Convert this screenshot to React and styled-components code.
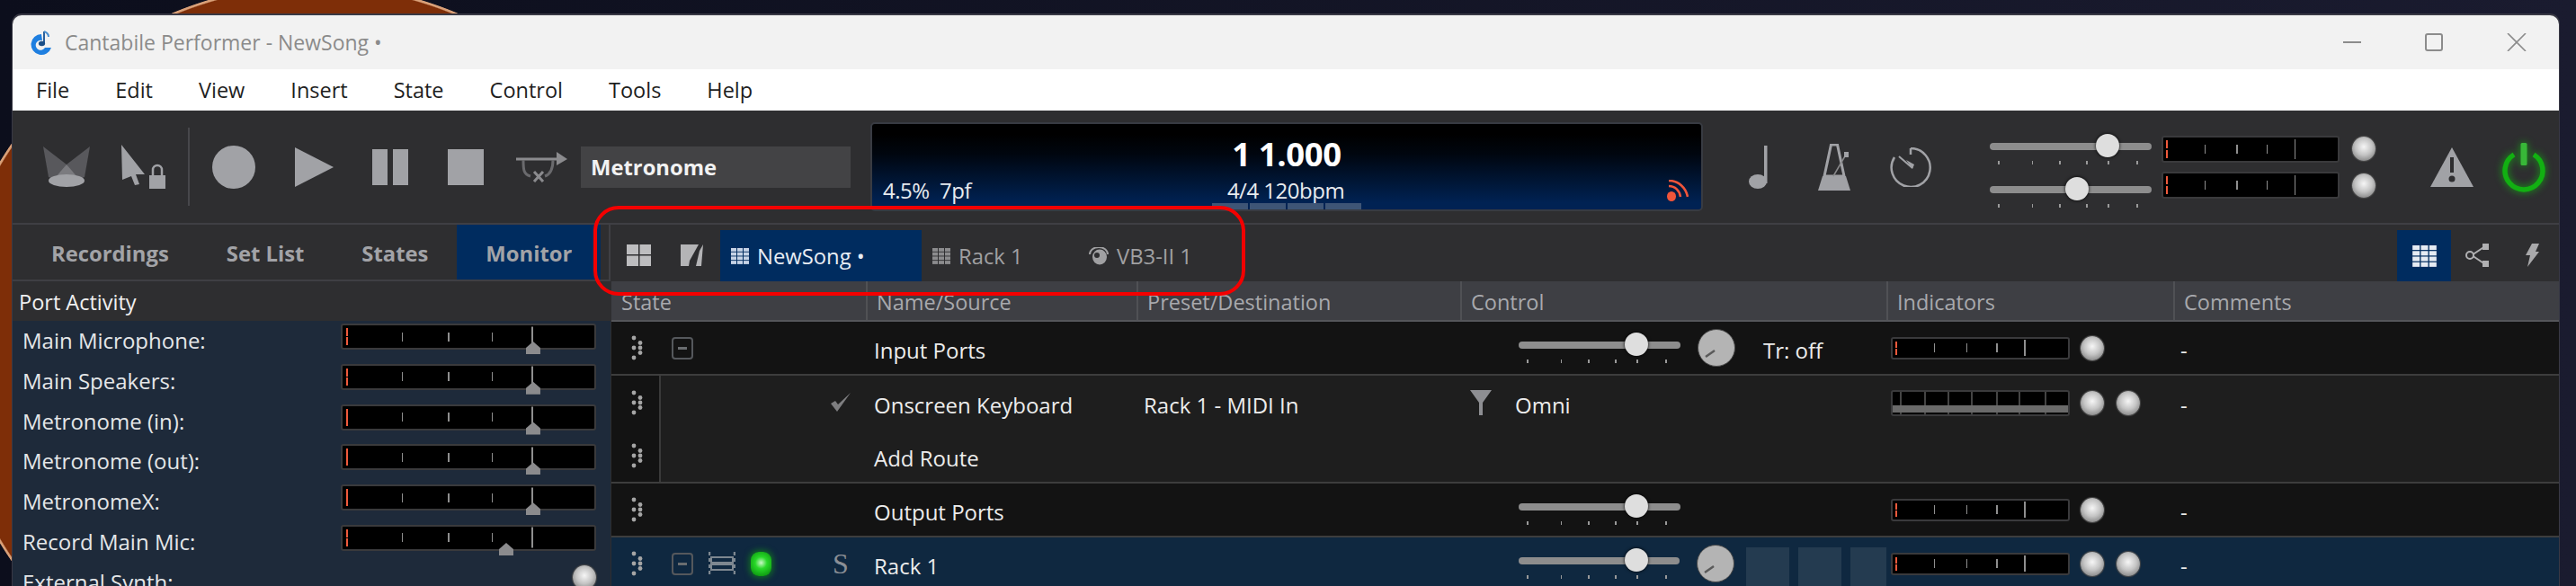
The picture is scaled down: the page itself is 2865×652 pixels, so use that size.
import React from "react";
import styled, { createGlobalStyle } from "styled-components";

const Global = createGlobalStyle`
  html, body { margin: 0; padding: 0; }
  body {
    width: 2865px;
    height: 652px;
    overflow: hidden;
    font-family: "Open Sans", "Noto Sans", sans-serif;
    background:
      radial-gradient(circle 409px at 350px 392px, #7e2e08 99.3%, #d9a078 99.6%, #d9a078 100%, transparent 100.2%),
      linear-gradient(to right, #0c0e1c, #1a1b2f);
  }
  #root { width: 2865px; height: 652px; overflow: hidden; }
`;

const Window = styled.div`
  position: relative;
  width: 2832px;
  height: 635px;
  margin: 17px 0 0 14px;
  overflow: hidden;
  background: #2e2e30;
  border-radius: 10px 10px 0 0;
  box-shadow: 0 -1px 0 1px #393945;
  display: flex;
  flex-direction: column;
`;

const TitleBar = styled.div`
  height: 60px;
  flex: none;
  display: flex;
  align-items: center;
  background: #f2f2f2;
  padding-left: 19px;
`;

const TitleText = styled.span`
  margin-left: 13px;
  font-size: 23px;
  color: #8b8b8b;
`;

const WinButtons = styled.div`
  margin-left: auto;
  margin-right: 36px;
  display: flex;
  gap: 71px;
  align-items: center;
`;

const MenuBar = styled.div`
  height: 46px;
  flex: none;
  display: flex;
  align-items: center;
  gap: 51px;
  background: #fff;
  padding-left: 26px;
`;

const MenuItem = styled.span`
  font-size: 23.5px;
  color: #1e1e1e;
`;

const Toolbar = styled.div`
  height: 127px;
  flex: none;
  box-sizing: border-box;
  border-bottom: 2px solid #3f3f44;
  display: flex;
  align-items: center;
`;

const ToolSlot = styled.div`
  flex: none;
  display: flex;
  margin-left: ${(p) => p.$ml}px;
  ${(p) => (p.$top !== undefined ? `align-self: flex-start; margin-top: ${p.$top}px;` : "")}
  ${(p) => (p.$col ? `flex-direction: column; gap: ${p.$gap}px;` : "")}
`;

const Separator = styled.div`
  width: 2px;
  height: 87px;
  margin-left: 25px;
  background: #47474b;
`;

const NameBox = styled.div`
  width: 300px;
  height: 46px;
  margin-left: 15px;
  box-sizing: border-box;
  padding-left: 11px;
  display: flex;
  align-items: center;
  background: #434345;
  color: #f2f2f2;
  font-size: 23.8px;
  font-weight: 700;
`;

const Display = styled.div`
  width: 926px;
  height: 99px;
  margin-left: 22px;
  flex: none;
  box-sizing: border-box;
  border: 2px solid #383b42;
  border-radius: 5px;
  background: linear-gradient(to bottom, #000 12%, #00060f 35%, #002253 92%);
  display: flex;
  flex-direction: column;
  overflow: hidden;
`;

const BigTime = styled.div`
  text-align: center;
  font-size: 36.5px;
  line-height: 40px;
  margin-top: 13px;
  font-weight: 700;
  color: #fff;
  letter-spacing: -0.4px;
`;

const DisplayRow = styled.div`
  display: grid;
  grid-template-columns: 1fr auto 1fr;
  align-items: center;
  padding: 0 14px 0 12px;
  height: 28px;
  margin-top: 4px;
  color: #e8ebef;
  font-size: 24px;
  letter-spacing: -0.5px;
`;

const DisplayRight = styled.div`
  justify-self: end;
  display: flex;
`;

const BeatRow = styled.div`
  margin-top: auto;
  display: flex;
  justify-content: center;
  gap: 2px;
`;

const Beat = styled.div`
  width: 40px;
  height: 7px;
  background: #3e5576;
`;

const SliderBox = styled.div`
  position: relative;
  width: 180px;
  height: 34px;
`;

const Track = styled.div`
  height: 8px;
  margin-top: 10px;
  border-radius: 4px;
  background: #8d8d8d;
`;

const Thumb = styled.div`
  position: absolute;
  top: 0;
  left: ${(p) => p.$at}px;
  width: 26px;
  height: 26px;
  border-radius: 50%;
  background: #dedede;
  box-shadow: 0 0 3px 1px rgba(0, 0, 0, 0.55);
`;

const SliderTick = styled.i`
  position: absolute;
  top: 30px;
  left: ${(p) => p.$at}px;
  width: 1.5px;
  height: 4px;
  background: #9a9a9a;
`;

const MeterBox = styled.div`
  position: relative;
  flex: none;
  width: ${(p) => p.$w}px;
  height: ${(p) => p.$h}px;
  box-sizing: border-box;
  background: #000;
  border: 2px solid #3a3a3c;
  border-radius: 3px;
`;

const MeterTick = styled.i`
  position: absolute;
  left: ${(p) => p.$pct}%;
  top: 50%;
  width: 1.5px;
  height: ${(p) => p.$h}px;
  transform: translateY(-50%);
  background: #8f8f8f;
`;

const MeterRed = styled.i`
  position: absolute;
  left: 1.5%;
  top: 3px;
  bottom: 3px;
  width: 2px;
  background: ${(p) =>
    p.$split
      ? "linear-gradient(to bottom, #f05a3c 45%, transparent 45%, transparent 55%, #f05a3c 55%)"
      : "#f05a3c"};
`;

const Level = styled.i`
  position: absolute;
  left: ${(p) => p.$pct}%;
  top: 18px;
  width: 16px;
  height: 14px;
  margin-left: -8px;
  background: #8b8b8d;
  clip-path: polygon(50% 0, 100% 50%, 100% 100%, 0 100%, 0 50%);
`;

const MidiBar = styled.i`
  position: absolute;
  left: 0;
  right: 0;
  top: 15px;
  height: 8px;
  background: #6a6a6a;
`;

const MidiLine = styled.i`
  position: absolute;
  left: ${(p) => p.$at}px;
  top: 0;
  bottom: 0;
  width: 2px;
  background: #444;
`;

const Led = styled.div`
  flex: none;
  width: 26px;
  height: 27px;
  margin-left: ${(p) => p.$ml || 0}px;
  border-radius: 50%;
  background: radial-gradient(circle at 50% 42%, #f6f6f6 0, #c4c4c4 45%, #777 90%);
  box-shadow: 0 0 1px 1px #4a4a4a;
`;

const GreenLed = styled.div`
  width: 23px;
  height: 27px;
  margin-left: 17px;
  border-radius: 9px;
  background: radial-gradient(circle at 50% 45%, #c9f7c6 0, #28d828 35%, #0f9c12 80%);
  box-shadow: 0 0 6px 2px rgba(20, 150, 20, 0.6);
`;

const TabsArea = styled.div`
  flex: 1;
  min-height: 0;
  display: grid;
  grid-template-columns: 665px 1fr;
`;

const LeftCol = styled.div`
  display: flex;
  flex-direction: column;
  min-height: 0;
`;

const SideTabs = styled.div`
  height: 61px;
  flex: none;
  display: flex;
  padding-left: 11px;
  border-bottom: 2px solid #3f3f44;
  border-right: 2px solid #3f3f44;
`;

const SideTab = styled.div`
  display: flex;
  align-items: center;
  padding: 2px 32px 0;
  font-size: 23.8px;
  font-weight: 700;
  color: #a2a3a7;
  background: ${(p) => (p.$active ? "#002c5f" : "transparent")};
`;

const PanelTitle = styled.div`
  height: 44px;
  flex: none;
  box-sizing: border-box;
  padding-top: 2px;
  display: flex;
  align-items: center;
  padding-left: 7px;
  font-size: 23.5px;
  color: #f0f0f0;
`;

const PortPanel = styled.div`
  flex: 1;
  background: #1e2a3a;
  padding: 3px 16px 0 11px;
  display: grid;
  grid-auto-rows: 44.8px;
`;

const PortRow = styled.div`
  display: flex;
  align-items: flex-start;
`;

const PortLabel = styled.span`
  flex: 1;
  font-size: 24px;
  line-height: 38px;
  color: #e4e6e8;
`;

const RightCol = styled.div`
  display: flex;
  flex-direction: column;
  min-height: 0;
`;

const TabRow = styled.div`
  height: 63px;
  flex: none;
  box-sizing: border-box;
  display: flex;
  align-items: flex-end;
  padding-left: 18px;
`;

const IconSlot = styled.div`
  align-self: center;
  margin-top: 4px;
  margin-left: ${(p) => p.$ml || 0}px;
  display: flex;
`;

const DocTab = styled.div`
  width: ${(p) => p.$w}px;
  height: 57px;
  box-sizing: border-box;
  padding-left: 12px;
  margin-left: ${(p) => p.$ml || 0}px;
  display: flex;
  align-items: center;
  gap: 9px;
  font-size: 23.8px;
  color: ${(p) => (p.$active ? "#e8edf4" : "#a0a0a2")};
  background: ${(p) => (p.$active ? "#002c5f" : "transparent")};
`;

const ViewTab = styled.div`
  margin-left: auto;
  width: 60px;
  height: 57px;
  display: flex;
  align-items: center;
  justify-content: center;
  background: #002c5f;
`;

const HeaderRow = styled.div`
  height: 45px;
  flex: none;
  box-sizing: border-box;
  display: grid;
  grid-template-columns: 283px 301px 360px 474px 319px 1fr;
  background: #3e3f44;
  border-bottom: 2px solid #55565a;
  margin-left: 1px;
`;

const HeaderCell = styled.div`
  display: flex;
  align-items: center;
  padding: 3px 0 0 ${(p) => (p.$first ? 11 : 10)}px;
  font-size: 23.5px;
  color: #a8a9ad;
  border-left: ${(p) => (p.$first ? "none" : "2px solid #505155")};
`;

const Row = styled.div`
  height: 60px;
  flex: none;
  box-sizing: border-box;
  display: grid;
  grid-template-columns: 283px 301px 360px 474px 319px 1fr;
  margin-left: 1px;
  background: ${(p) => (p.$selected ? "#0f2840" : p.$sub ? "#1e1e1e" : "#131313")};
  border-bottom: ${(p) => (p.$bare ? "none" : "2px solid #3d3d3d")};
  color: #ececec;
  font-size: 24px;
`;

const Cell = styled.div`
  display: flex;
  align-items: center;
  padding-left: ${(p) => p.$pad || 0}px;
`;

const RowText = styled.span`
  margin-top: 4px;
  margin-left: ${(p) => p.$ml || 0}px;
`;

const StateCell = styled(Cell)`
  padding-left: 22px;
  padding-right: 16px;
  ${(p) =>
    p.$sub
      ? "background: linear-gradient(to right, #131313 53px, #3a3a3a 53px, #3a3a3a 55px, transparent 55px);"
      : ""}
`;

const Marker = styled.span`
  margin-left: auto;
  width: 24px;
  display: flex;
  justify-content: center;
  font-family: "Liberation Serif", serif;
  font-size: 32px;
  color: #8a8f96;
`;

const KnobSlot = styled.div`
  margin-left: ${(p) => p.$ml}px;
  display: flex;
`;

const PadBlocks = styled.div`
  align-self: flex-end;
  margin-left: 13px;
  height: 47px;
  display: flex;
  gap: 10px;
`;

const PadBlock = styled.div`
  width: ${(p) => p.$w}px;
  height: 100%;
  background: #243b50;
`;

const Callout = styled.div`
  position: absolute;
  left: 646px;
  top: 212px;
  width: 725px;
  height: 100px;
  box-sizing: border-box;
  border: 4px solid #f40000;
  border-radius: 28px;
  pointer-events: none;
`;

const GRAY = "#a1a2a6";

const Logo = () => (
  <svg width="26" height="29" viewBox="0 0 26 29">
    <path d="M13 5a11.5 11.5 0 1 0 11 15h-7a5.5 5.5 0 1 1-3-8z" fill="#1f7fe0" />
    <path d="M16 2v13" stroke="#2a5f9a" strokeWidth="2" />
    <path d="M16 2c3 1 5 3 5 6" stroke="#4a8fd0" strokeWidth="2" fill="none" />
    <ellipse cx="13.5" cy="15.5" rx="3.6" ry="2.8" fill="#1b4f88" />
  </svg>
);

const Spotlight = () => (
  <svg width="52" height="45" viewBox="0 0 52 45">
    <path d="M0 0 L26 20 L16 38 L6 34z" fill="#58585c" />
    <path d="M52 0 L26 20 L36 38 L46 34z" fill="#58585c" />
    <path d="M26 20 L14 34 L38 34z" fill="#7b7b7f" />
    <ellipse cx="26" cy="38" rx="20" ry="7" fill={GRAY} />
  </svg>
);

const CursorLock = () => (
  <svg width="49" height="49" viewBox="0 0 49 49">
    <path d="M0 0 L26 33 L16 33 L20 44 L15 45 L11 35 L1 39z" fill={GRAY} />
    <rect x="31" y="34" width="18" height="15" fill={GRAY} />
    <path d="M35 34v-6a5 5 0 0 1 10 0v6" stroke={GRAY} strokeWidth="2.5" fill="none" />
  </svg>
);

const Record = () => (
  <svg width="48" height="48" viewBox="0 0 48 48">
    <circle cx="24" cy="24" r="24" fill={GRAY} />
  </svg>
);

const Play = () => (
  <svg width="43" height="44" viewBox="0 0 43 44">
    <path d="M0 0L43 22L0 44z" fill={GRAY} />
  </svg>
);

const Pause = () => (
  <svg width="40" height="40" viewBox="0 0 40 40">
    <rect width="17" height="40" fill={GRAY} />
    <rect x="23" width="17" height="40" fill={GRAY} />
  </svg>
);

const Stop = () => (
  <svg width="40" height="40" viewBox="0 0 40 40">
    <rect width="40" height="40" fill={GRAY} />
  </svg>
);

const LoopIcon = () => (
  <svg width="57" height="34" viewBox="0 0 57 34">
    <path d="M0 8H48" stroke="#8b8b8e" strokeWidth="3" />
    <path d="M45 0L57 8L45 15z" fill="#8b8b8e" />
    <path d="M8 9c0 10 0 16 8 18M41 9c0 10-3 16-9 18" stroke="#6a6a6d" strokeWidth="3" fill="none" />
    <path d="M20 22L30 33M30 22L20 33" stroke="#8b8b8e" strokeWidth="3" />
  </svg>
);

const Note = () => (
  <svg width="22" height="48" viewBox="0 0 22 48">
    <rect x="17" width="3.5" height="42" fill={GRAY} />
    <ellipse cx="10" cy="40" rx="10" ry="8" fill={GRAY} />
  </svg>
);

const Metronome = () => (
  <svg width="38" height="52" viewBox="0 0 38 52">
    <path d="M15.5 1H22.5L30 36H8z" fill="none" stroke={GRAY} strokeWidth="3" />
    <path d="M6 36H32L37 52H1z" fill={GRAY} />
    <path d="M18 36L32 12" stroke="#8a8a8c" strokeWidth="1.5" />
    <rect x="30" y="9" width="5" height="6" fill={GRAY} />
  </svg>
);

const Timer = () => (
  <svg width="46" height="44" viewBox="0 0 46 44">
    <path d="M23 1a21.5 21.5 0 1 1-18 10" fill="none" stroke={GRAY} strokeWidth="2.5" />
    <path d="M23 1v7" stroke={GRAY} strokeWidth="2.5" />
    <path d="M10 10L25 23" stroke={GRAY} strokeWidth="2" />
    <path d="M18 14L27 19L25 24z" fill={GRAY} />
  </svg>
);

const Warning = () => (
  <svg width="48" height="44" viewBox="0 0 48 44">
    <path d="M24 0L48 44H0z" fill={GRAY} />
    <path d="M24 11v17" stroke="#2e2e30" strokeWidth="4" />
    <circle cx="24" cy="35" r="3.5" fill="#2e2e30" />
  </svg>
);

const Power = () => (
  <svg width="48" height="54" viewBox="0 0 48 54" style={{ overflow: "visible", filter: "drop-shadow(0 0 4px #14a514)" }}>
    <path d="M13 13a21 21 0 1 0 22 0" fill="none" stroke="#12b012" strokeWidth="5.5" />
    <rect x="20.5" width="7" height="25" rx="1.5" fill="#38b838" />
  </svg>
);

const Rss = () => (
  <svg width="24" height="24" viewBox="0 0 24 24">
    <ellipse cx="5" cy="18.5" rx="5" ry="5.5" fill="#f0553a" />
    <path d="M2 7c7 0 12 5 13 12" fill="none" stroke="#f0553a" strokeWidth="2.6" />
    <path d="M2 1c11 0 19 8 21 18" fill="none" stroke="#f0553a" strokeWidth="2.6" />
  </svg>
);

const TableIcon = ({ color = "#a0a0a2", w = 20, h = 18 }) => (
  <svg width={w} height={h} viewBox="0 0 20 18">
    {[0, 1, 2, 3].map((r) =>
      [0, 1, 2].map((c) => (
        <rect key={`${r}-${c}`} x={c * 7} y={r * 4.7} width="6" height="3.8" fill={color} />
      ))
    )}
  </svg>
);

const Quad = () => (
  <svg width="27" height="24" viewBox="0 0 27 24">
    <rect width="13" height="11" fill="#bdbdbf" />
    <rect x="14.5" width="12.5" height="11" fill="#bdbdbf" />
    <rect y="12.5" width="13" height="11.5" fill="#bdbdbf" />
    <rect x="14.5" y="12.5" width="12.5" height="11.5" fill="#bdbdbf" />
  </svg>
);

const EditIcon = () => (
  <svg width="26" height="27" viewBox="0 0 26 27">
    <path d="M0 2H20L10 20L9 26H0z" fill="#b4b4b6" />
    <path d="M17 26H23L25 2L21 9z" fill="#b4b4b6" />
    <path d="M13 20L23 1" stroke="#2e2e30" strokeWidth="2" />
  </svg>
);

const Vb3Icon = () => (
  <svg width="22" height="20" viewBox="0 0 22 20">
    <path d="M1 8a10 8 0 0 1 20 0" fill="none" stroke="#a0a0a2" strokeWidth="2" />
    <ellipse cx="12" cy="11" rx="8" ry="8.5" fill="#a0a0a2" />
    <ellipse cx="9" cy="9" rx="3" ry="3" fill="#2e2e30" />
  </svg>
);

const ShareIcon = () => (
  <svg width="28" height="26" viewBox="0 0 28 26">
    <path d="M7 13L22 3M7 13L22 23" stroke="#b0b0b2" strokeWidth="2" />
    <circle cx="5" cy="13" r="4" fill="#2e2e30" stroke="#b0b0b2" strokeWidth="2" />
    <path d="M19 0H26V7H19zM19 19H26V26H19z" fill="#b0b0b2" />
  </svg>
);

const Bolt = () => (
  <svg width="15" height="26" viewBox="0 0 15 26">
    <path d="M7 0H15L11 9H15L2 26L5 13H0z" fill="#a8a8aa" />
  </svg>
);

const Grip = () => (
  <svg width="13" height="28" viewBox="0 0 13 28">
    {[[3, 3], [10, 8.5], [3, 14], [10, 19.5], [3, 25], [10, 14]].map(([x, y]) => (
      <circle key={`${x}-${y}`} cx={x} cy={y} r="2.4" fill="#a5a5a5" />
    ))}
  </svg>
);

const MinusBox = () => (
  <svg width="24" height="25" viewBox="0 0 24 25" style={{ marginLeft: 32 }}>
    <rect x="1" y="1" width="22" height="23" rx="3" fill="none" stroke="#55585c" strokeWidth="2" />
    <rect x="7" y="11" width="10" height="3" fill="#6a6d70" />
  </svg>
);

const RackIcon = () => (
  <svg width="30" height="26" viewBox="0 0 30 26" style={{ marginLeft: 17 }}>
    <path d="M1 0V26M29 0V26" stroke="#7d8790" strokeWidth="2.5" strokeDasharray="4 3" />
    <rect x="3" y="6" width="24" height="6" fill="none" stroke="#7d8790" strokeWidth="2" />
    <rect x="3" y="14" width="24" height="6" fill="none" stroke="#7d8790" strokeWidth="2" />
  </svg>
);

const Check = () => (
  <svg width="24" height="22" viewBox="0 0 24 22">
    <path d="M1 12L8 21L23 0L9 13L6 9z" fill="#7e7e80" />
  </svg>
);

const Funnel = () => (
  <svg width="24" height="28" viewBox="0 0 24 28" style={{ flex: "none" }}>
    <path d="M0 0H24L14 14V28H10V14z" fill="#8d8e92" />
  </svg>
);

const Knob = () => (
  <svg width="42" height="42" viewBox="0 0 42 42">
    <circle cx="21" cy="21" r="20.5" fill="#b4b4b4" stroke="#4a4a4a" strokeWidth="1" />
    <path d="M9 31L19 24" stroke="#5a5a5a" strokeWidth="2.5" />
  </svg>
);

const TICKS = [9, 46.5, 77, 107, 131, 163];

const Slider = ({ at }) => (
  <SliderBox>
    <Track />
    {TICKS.map((t) => (
      <SliderTick key={t} $at={t} />
    ))}
    <Thumb $at={at} />
  </SliderBox>
);

const Meter = ({ w, h, tall, split, level }) => (
  <MeterBox $w={w} $h={h}>
    <MeterRed $split={split} />
    <MeterTick $pct={23.5} $h={10} />
    <MeterTick $pct={41.8} $h={10} />
    <MeterTick $pct={59.2} $h={10} />
    <MeterTick $pct={75} $h={tall} />
    {level ? <Level $pct={level} /> : null}
  </MeterBox>
);

const MidiMeter = () => (
  <MeterBox $w={199} $h={29}>
    {[8, 35, 61, 87, 115, 140, 169].map((x) => (
      <MidiLine key={x} $at={x} />
    ))}
    <MidiBar />
  </MeterBox>
);

const ports = [
  { name: "Main Microphone:", split: true, level: 75.7 },
  { name: "Main Speakers:", split: true, level: 75.7 },
  { name: "Metronome (in):", level: 75.7 },
  { name: "Metronome (out):", level: 75.7 },
  { name: "MetronomeX:", level: 75.7 },
  { name: "Record Main Mic:", split: true, level: 65 },
];

const columns = ["State", "Name/Source", "Preset/Destination", "Control", "Indicators", "Comments"];

const menus = ["File", "Edit", "View", "Insert", "State", "Control", "Tools", "Help"];

export default function App() {
  return (
    <>
      <Global />
      <Window>
        <TitleBar>
          <Logo />
          <TitleText>Cantabile Performer - NewSong •</TitleText>
          <WinButtons>
            <svg width="20" height="20" viewBox="0 0 20 20">
              <path d="M0 10H20" stroke="#8c8c8c" strokeWidth="2" />
            </svg>
            <svg width="20" height="20" viewBox="0 0 20 20">
              <rect x="1" y="1" width="18" height="18" rx="2" fill="none" stroke="#8c8c8c" strokeWidth="2" />
            </svg>
            <svg width="22" height="20" viewBox="0 0 22 20">
              <path d="M1 0L21 20M21 0L1 20" stroke="#8c8c8c" strokeWidth="1.6" />
            </svg>
          </WinButtons>
        </TitleBar>

        <MenuBar>
          {menus.map((m) => (
            <MenuItem key={m}>{m}</MenuItem>
          ))}
        </MenuBar>

        <Toolbar>
          <ToolSlot $ml={34}><Spotlight /></ToolSlot>
          <ToolSlot $ml={35}><CursorLock /></ToolSlot>
          <Separator />
          <ToolSlot $ml={25}><Record /></ToolSlot>
          <ToolSlot $ml={44}><Play /></ToolSlot>
          <ToolSlot $ml={43}><Pause /></ToolSlot>
          <ToolSlot $ml={44}><Stop /></ToolSlot>
          <ToolSlot $ml={36}><LoopIcon /></ToolSlot>
          <NameBox>Metronome</NameBox>
          <Display>
            <BigTime>1 1.000</BigTime>
            <DisplayRow>
              <span>4.5%&nbsp; 7pf</span>
              <span>4/4 120bpm</span>
              <DisplayRight><Rss /></DisplayRight>
            </DisplayRow>
            <BeatRow>
              <Beat />
              <Beat />
              <Beat />
              <Beat />
            </BeatRow>
          </Display>
          <ToolSlot $ml={51}><Note /></ToolSlot>
          <ToolSlot $ml={54}><Metronome /></ToolSlot>
          <ToolSlot $ml={43}><Timer /></ToolSlot>
          <ToolSlot $ml={65} $top={26} $col $gap={14}>
            <Slider at={118} />
            <Slider at={84} />
          </ToolSlot>
          <ToolSlot $ml={11} $top={28} $col $gap={10}>
            <Meter w={198} h={30} tall={22} split />
            <Meter w={198} h={30} tall={22} split />
          </ToolSlot>
          <ToolSlot $ml={14} $top={29} $col $gap={14}>
            <Led />
            <Led />
          </ToolSlot>
          <ToolSlot $ml={61}><Warning /></ToolSlot>
          <ToolSlot $ml={32}><Power /></ToolSlot>
        </Toolbar>

        <TabsArea>
          <LeftCol>
            <SideTabs>
              <SideTab>Recordings</SideTab>
              <SideTab>Set List</SideTab>
              <SideTab>States</SideTab>
              <SideTab $active>Monitor</SideTab>
            </SideTabs>
            <PanelTitle>Port Activity</PanelTitle>
            <PortPanel>
              {ports.map((p) => (
                <PortRow key={p.name}>
                  <PortLabel>{p.name}</PortLabel>
                  <Meter w={284} h={29} tall={23} split={p.split} level={p.level} />
                </PortRow>
              ))}
              <PortRow>
                <PortLabel>External Synth:</PortLabel>
                <Led />
              </PortRow>
            </PortPanel>
          </LeftCol>

          <RightCol>
            <TabRow>
              <IconSlot><Quad /></IconSlot>
              <IconSlot $ml={33}><EditIcon /></IconSlot>
              <DocTab $active $w={224} $ml={18}>
                <TableIcon color="#c6d3e6" />
                <span>NewSong •</span>
              </DocTab>
              <DocTab $w={174}>
                <TableIcon color="#8c8c8e" />
                <span>Rack 1</span>
              </DocTab>
              <DocTab $w={174}>
                <Vb3Icon />
                <span>VB3-II 1</span>
              </DocTab>
              <ViewTab>
                <TableIcon color="#e6ebf3" w={27} h={24} />
              </ViewTab>
              <IconSlot $ml={16}><ShareIcon /></IconSlot>
              <IconSlot $ml={39}><Bolt /></IconSlot>
              <IconSlot $ml={22} />
            </TabRow>

            <HeaderRow>
              {columns.map((c, i) => (
                <HeaderCell key={c} $first={i === 0}>{c}</HeaderCell>
              ))}
            </HeaderRow>

            <Row>
              <StateCell><Grip /><MinusBox /></StateCell>
              <Cell $pad={9}><RowText>Input Ports</RowText></Cell>
              <Cell />
              <Cell $pad={65}>
                <Slider at={118} />
                <KnobSlot $ml={19}><Knob /></KnobSlot>
                <RowText $ml={31}>Tr: off</RowText>
              </Cell>
              <Cell $pad={5}>
                <Meter w={199} h={25} tall={18} split />
                <Led $ml={12} />
              </Cell>
              <Cell $pad={8}><RowText>-</RowText></Cell>
            </Row>

            <Row $sub $bare>
              <StateCell $sub><Grip /><Marker><Check /></Marker></StateCell>
              <Cell $pad={9}><RowText>Onscreen Keyboard</RowText></Cell>
              <Cell $pad={8}><RowText>Rack 1 - MIDI In</RowText></Cell>
              <Cell $pad={11}>
                <Funnel />
                <RowText $ml={26}>Omni</RowText>
              </Cell>
              <Cell $pad={5}>
                <MidiMeter />
                <Led $ml={12} />
                <Led $ml={14} />
              </Cell>
              <Cell $pad={8}><RowText>-</RowText></Cell>
            </Row>

            <Row $sub>
              <StateCell $sub><Grip /></StateCell>
              <Cell $pad={9}><RowText>Add Route</RowText></Cell>
              <Cell />
              <Cell />
              <Cell />
              <Cell />
            </Row>

            <Row>
              <StateCell><Grip /></StateCell>
              <Cell $pad={9}><RowText>Output Ports</RowText></Cell>
              <Cell />
              <Cell $pad={65}><Slider at={118} /></Cell>
              <Cell $pad={5}>
                <Meter w={199} h={25} tall={18} split />
                <Led $ml={12} />
              </Cell>
              <Cell $pad={8}><RowText>-</RowText></Cell>
            </Row>

            <Row $selected>
              <StateCell>
                <Grip />
                <MinusBox />
                <RackIcon />
                <GreenLed />
                <Marker>S</Marker>
              </StateCell>
              <Cell $pad={9}><RowText>Rack 1</RowText></Cell>
              <Cell />
              <Cell $pad={65}>
                <Slider at={118} />
                <KnobSlot $ml={19}><Knob /></KnobSlot>
                <PadBlocks>
                  <PadBlock $w={48} />
                  <PadBlock $w={48} />
                  <PadBlock $w={40} />
                </PadBlocks>
              </Cell>
              <Cell $pad={5}>
                <Meter w={199} h={25} tall={18} split />
                <Led $ml={12} />
                <Led $ml={14} />
              </Cell>
              <Cell $pad={8}><RowText>-</RowText></Cell>
            </Row>
          </RightCol>
        </TabsArea>

        <Callout />
      </Window>
    </>
  );
}
